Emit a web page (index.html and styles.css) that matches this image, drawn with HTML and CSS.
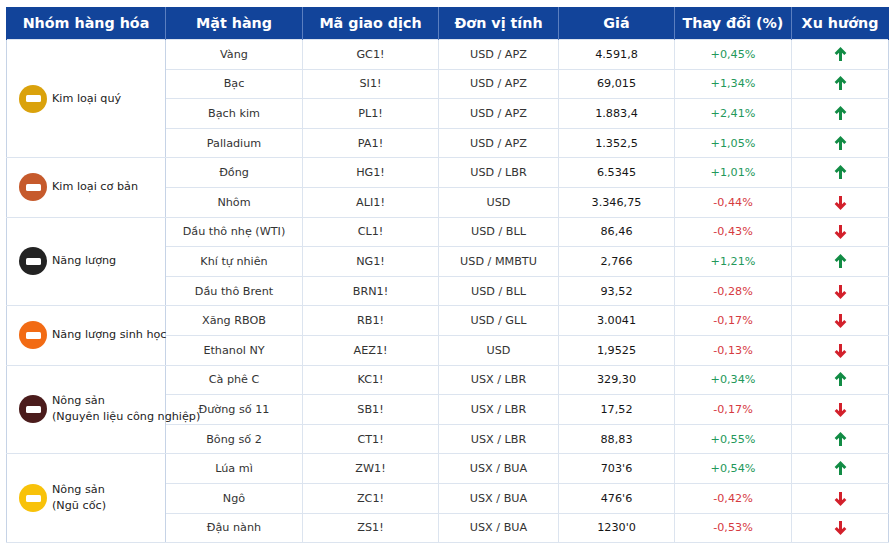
FILE: index.html
```html
<!DOCTYPE html>
<html lang="vi">
<head>
<meta charset="utf-8">
<link rel="stylesheet" href="styles.css">
</head>
<body>
<div class="wrap">
<table class="tbl">
  <colgroup>
    <col class="c1"><col class="c2"><col class="c3"><col class="c4"><col class="c5"><col class="c6"><col class="c7">
  </colgroup>
  <thead>
    <tr>
      <th>Nhóm hàng hóa</th><th>Mặt hàng</th><th>Mã giao dịch</th><th>Đơn vị tính</th><th>Giá</th><th>Thay đổi (%)</th><th>Xu hướng</th>
    </tr>
  </thead>
  <tbody class="grp">
    <tr>
      <td rowspan="4" class="cat"><div class="catin"><span class="ico gold"><i></i></span><span>Kim loại quý</span></div></td>
      <td>Vàng</td><td>GC1!</td><td>USD / APZ</td><td class="price">4.591,8</td><td class="up">+0,45%</td><td><svg class="arr up" viewBox="0 0 12 14"><path d="M6 13V2M1.5 6.5L6 2l4.5 4.5"/></svg></td>
    </tr>
    <tr><td>Bạc</td><td>SI1!</td><td>USD / APZ</td><td class="price">69,015</td><td class="up">+1,34%</td><td><svg class="arr up" viewBox="0 0 12 14"><path d="M6 13V2M1.5 6.5L6 2l4.5 4.5"/></svg></td></tr>
    <tr><td>Bạch kim</td><td>PL1!</td><td>USD / APZ</td><td class="price">1.883,4</td><td class="up">+2,41%</td><td><svg class="arr up" viewBox="0 0 12 14"><path d="M6 13V2M1.5 6.5L6 2l4.5 4.5"/></svg></td></tr>
    <tr><td>Palladium</td><td>PA1!</td><td>USD / APZ</td><td class="price">1.352,5</td><td class="up">+1,05%</td><td><svg class="arr up" viewBox="0 0 12 14"><path d="M6 13V2M1.5 6.5L6 2l4.5 4.5"/></svg></td></tr>
  </tbody>
  <tbody class="grp">
    <tr>
      <td rowspan="2" class="cat"><div class="catin"><span class="ico copper"><i></i></span><span>Kim loại cơ bản</span></div></td>
      <td>Đồng</td><td>HG1!</td><td>USD / LBR</td><td class="price">6.5345</td><td class="up">+1,01%</td><td><svg class="arr up" viewBox="0 0 12 14"><path d="M6 13V2M1.5 6.5L6 2l4.5 4.5"/></svg></td>
    </tr>
    <tr><td>Nhôm</td><td>ALI1!</td><td>USD</td><td class="price">3.346,75</td><td class="down">-0,44%</td><td><svg class="arr down" viewBox="0 0 12 14"><path d="M6 1v11M1.5 7.5L6 12l4.5-4.5"/></svg></td></tr>
  </tbody>
  <tbody class="grp">
    <tr>
      <td rowspan="3" class="cat"><div class="catin"><span class="ico black"><i></i></span><span>Năng lượng</span></div></td>
      <td>Dầu thô nhẹ (WTI)</td><td>CL1!</td><td>USD / BLL</td><td class="price">86,46</td><td class="down">-0,43%</td><td><svg class="arr down" viewBox="0 0 12 14"><path d="M6 1v11M1.5 7.5L6 12l4.5-4.5"/></svg></td>
    </tr>
    <tr><td>Khí tự nhiên</td><td>NG1!</td><td>USD / MMBTU</td><td class="price">2,766</td><td class="up">+1,21%</td><td><svg class="arr up" viewBox="0 0 12 14"><path d="M6 13V2M1.5 6.5L6 2l4.5 4.5"/></svg></td></tr>
    <tr><td>Dầu thô Brent</td><td>BRN1!</td><td>USD / BLL</td><td class="price">93,52</td><td class="down">-0,28%</td><td><svg class="arr down" viewBox="0 0 12 14"><path d="M6 1v11M1.5 7.5L6 12l4.5-4.5"/></svg></td></tr>
  </tbody>
  <tbody class="grp">
    <tr>
      <td rowspan="2" class="cat"><div class="catin"><span class="ico orange"><i></i></span><span>Năng lượng sinh học</span></div></td>
      <td>Xăng RBOB</td><td>RB1!</td><td>USD / GLL</td><td class="price">3.0041</td><td class="down">-0,17%</td><td><svg class="arr down" viewBox="0 0 12 14"><path d="M6 1v11M1.5 7.5L6 12l4.5-4.5"/></svg></td>
    </tr>
    <tr><td>Ethanol NY</td><td>AEZ1!</td><td>USD</td><td class="price">1,9525</td><td class="down">-0,13%</td><td><svg class="arr down" viewBox="0 0 12 14"><path d="M6 1v11M1.5 7.5L6 12l4.5-4.5"/></svg></td></tr>
  </tbody>
  <tbody class="grp">
    <tr>
      <td rowspan="3" class="cat"><div class="catin"><span class="ico maroon"><i></i></span><span>Nông sản<br>(Nguyên liệu công nghiệp)</span></div></td>
      <td>Cà phê C</td><td>KC1!</td><td>USX / LBR</td><td class="price">329,30</td><td class="up">+0,34%</td><td><svg class="arr up" viewBox="0 0 12 14"><path d="M6 13V2M1.5 6.5L6 2l4.5 4.5"/></svg></td>
    </tr>
    <tr><td>Đường số 11</td><td>SB1!</td><td>USX / LBR</td><td class="price">17,52</td><td class="down">-0,17%</td><td><svg class="arr down" viewBox="0 0 12 14"><path d="M6 1v11M1.5 7.5L6 12l4.5-4.5"/></svg></td></tr>
    <tr><td>Bông số 2</td><td>CT1!</td><td>USX / LBR</td><td class="price">88,83</td><td class="up">+0,55%</td><td><svg class="arr up" viewBox="0 0 12 14"><path d="M6 13V2M1.5 6.5L6 2l4.5 4.5"/></svg></td></tr>
  </tbody>
  <tbody class="grp">
    <tr>
      <td rowspan="3" class="cat"><div class="catin"><span class="ico yellow"><i></i></span><span>Nông sản<br>(Ngũ cốc)</span></div></td>
      <td>Lúa mì</td><td>ZW1!</td><td>USX / BUA</td><td class="price">703'6</td><td class="up">+0,54%</td><td><svg class="arr up" viewBox="0 0 12 14"><path d="M6 13V2M1.5 6.5L6 2l4.5 4.5"/></svg></td>
    </tr>
    <tr><td>Ngô</td><td>ZC1!</td><td>USX / BUA</td><td class="price">476'6</td><td class="down">-0,42%</td><td><svg class="arr down" viewBox="0 0 12 14"><path d="M6 1v11M1.5 7.5L6 12l4.5-4.5"/></svg></td></tr>
    <tr><td>Đậu nành</td><td>ZS1!</td><td>USX / BUA</td><td class="price">1230'0</td><td class="down">-0,53%</td><td><svg class="arr down" viewBox="0 0 12 14"><path d="M6 1v11M1.5 7.5L6 12l4.5-4.5"/></svg></td></tr>
  </tbody>
</table>
</div>
</body>
</html>
```
FILE: styles.css
```css
html, body {
  margin: 0;
  padding: 0;
  background: #ffffff;
}
body {
  font-family: "DejaVu Sans", Verdana, sans-serif;
  color: #333333;
}
.wrap {
  padding: 7px 7px 0 6px;
}
.tbl {
  width: 882px;
  table-layout: fixed;
  border-collapse: collapse;
  font-size: 11.2px;
}
.c1 { width: 159px; }
.c2 { width: 137px; }
.c3 { width: 136px; }
.c4 { width: 120px; }
.c5 { width: 116px; }
.c6 { width: 117px; }
.c7 { width: 97px; }

.tbl th {
  background: #12449a;
  color: #ffffff;
  font-size: 14.3px;
  font-weight: bold;
  height: 32px;
  padding: 0;
  text-align: center;
  border-left: 1px solid #5b7fc0;
  border-right: 1px solid #5b7fc0;
  white-space: nowrap;
}
.tbl th:first-child { border-left-color: #12449a; }
.tbl th:last-child { border-right-color: #12449a; }

.tbl td {
  height: 28.6px;
  padding: 0;
  text-align: center;
  vertical-align: middle;
  border: 1px solid #dce4ef;
  white-space: nowrap;
}
.tbl tbody.grp {
  border-top: 1px solid #b9c9df;
}
.tbl tbody.grp:last-child {
  border-bottom: 1px solid #b9c9df;
}
.tbl td:first-child { border-left: 1px solid #c6d3e6; }
.tbl td:last-child { border-right: 1px solid #c6d3e6; }
.tbl td.cat {
  text-align: left;
  overflow: visible;
  border-right: 1px solid #c6d3e6;
  color: #222222;
}
.catin {
  display: flex;
  align-items: center;
  gap: 5px;
  padding-left: 12px;
  line-height: 16px;
}
.ico {
  flex: none;
  width: 28px;
  height: 28px;
  border-radius: 50%;
  display: flex;
  align-items: center;
  justify-content: center;
}
.ico i {
  display: block;
  width: 15px;
  height: 7px;
  background: #ffffff;
  border-radius: 1.5px;
}
.gold { background: #daa20c; }
.copper { background: #c65a2c; }
.black { background: #232323; }
.orange { background: #f26b14; }
.maroon { background: #4b1c1c; }
.yellow { background: #f8c20a; }

.price { color: #151515; }
.tbl td.up { color: #23985a; }
.tbl td.down { color: #d63a3f; }

.arr {
  width: 13px;
  height: 15px;
  display: inline-block;
  vertical-align: middle;
  fill: none;
  stroke-width: 2.8;
  stroke-linecap: butt;
  stroke-linejoin: miter;
}
.arr.up { stroke: #128c45; }
.arr.down { stroke: #d3202b; }
```
